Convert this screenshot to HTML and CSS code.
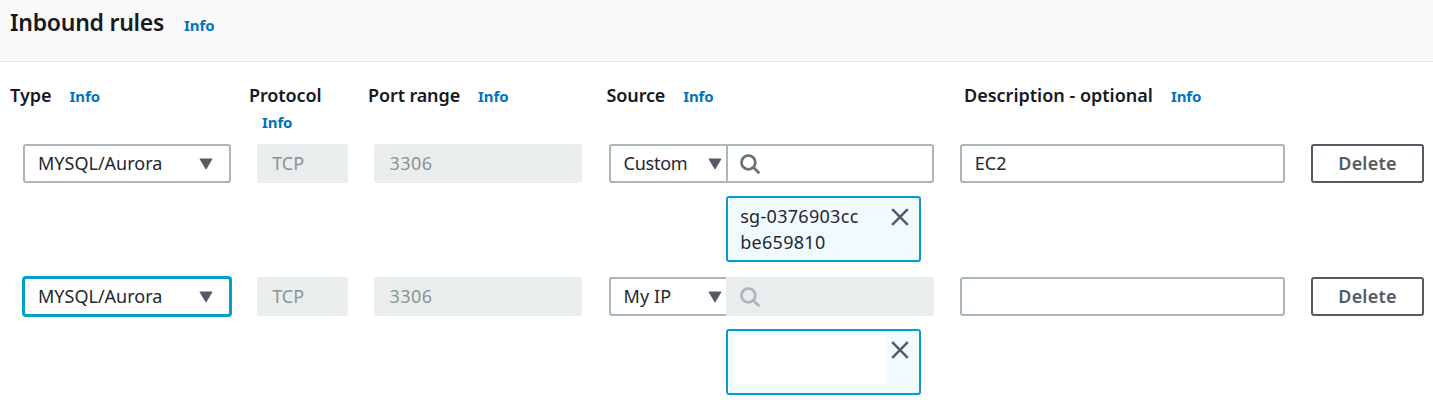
FILE: index.html
```html
<!DOCTYPE html>
<html lang="en">
<head>
<meta charset="utf-8">
<title>Inbound rules</title>
<link rel="stylesheet" href="styles.css">
</head>
<body>
<svg width="0" height="0" class="defs">
  <symbol id="caret" viewBox="0 0 14 12"><path d="M1.2 1h11.6L7 10.6z" fill="currentColor" stroke="currentColor" stroke-width="1.2" stroke-linejoin="round"/></symbol>
  <symbol id="search" viewBox="0 0 20 20"><g fill="none" stroke="currentColor" stroke-width="2.7"><circle cx="8.4" cy="8.4" r="6.9"/><path d="M13.2 13.2l6 6"/></g></symbol>
  <symbol id="close" viewBox="0 0 18 18"><path d="M1.2 1.2l15.6 15.6M16.8 1.2L1.2 16.8" fill="none" stroke="currentColor" stroke-width="2.5"/></symbol>
</svg>
<header class="panel-header"><h2 class="title">Inbound rules</h2><a class="info">Info</a></header>
<main>
  <div class="labels">
    <div class="label"><span>Type</span><a class="info">Info</a></div>
    <div class="label stacked"><span class="l-protocol">Protocol</span><a class="info">Info</a></div>
    <div class="label"><span class="l-port">Port range</span><a class="info">Info</a></div>
    <div class="label"><span class="l-source">Source</span><a class="info">Info</a></div>
    <div class="label"><span>Description - optional</span><a class="info">Info</a></div>
  </div>
  <div class="rule">
    <div class="field select"><span>MYSQL/Aurora</span><svg class="caret"><use href="#caret"/></svg></div>
    <div class="field disabled"><span class="t-tcp">TCP</span></div>
    <div class="field disabled"><span class="t-port">3306</span></div>
    <div class="source">
      <div class="field select mode"><span class="t-custom">Custom</span><svg class="caret"><use href="#caret"/></svg></div>
      <div class="field search"><svg class="glass"><use href="#search"/></svg></div>
      <div class="token"><span class="t-sg">sg-0376903cc<br>be659810</span><svg class="close"><use href="#close"/></svg></div>
    </div>
    <div class="field"><span>EC2</span></div>
    <button class="delete">Delete</button>
  </div>
  <div class="rule">
    <div class="field select focused"><span>MYSQL/Aurora</span><svg class="caret"><use href="#caret"/></svg></div>
    <div class="field disabled"><span class="t-tcp">TCP</span></div>
    <div class="field disabled"><span class="t-port">3306</span></div>
    <div class="source">
      <div class="field select mode"><span class="t-myip">My IP</span><svg class="caret"><use href="#caret"/></svg></div>
      <div class="field search disabled"><svg class="glass"><use href="#search"/></svg></div>
      <div class="token"><span class="blank"></span><svg class="close"><use href="#close"/></svg></div>
    </div>
    <div class="field"></div>
    <button class="delete">Delete</button>
  </div>
</main>
</body>
</html>
```
FILE: styles.css
```css
* { box-sizing: border-box; }
body { margin: 0; height: 402px; overflow: hidden; background: #fff; color: #16191f; font: 18px/26px "Noto Sans", sans-serif; }
.defs { display: block; }
.panel-header { display: flex; align-items: baseline; gap: 20px; height: 62px; padding: 6px 10px 0; background: #fafafa; border-bottom: 1px solid #e4e6e6; }
.title { margin: 0; font-size: 23px; line-height: 32px; font-weight: 600; letter-spacing: -0.26px; }
.info { color: #0073bb; font-size: 15px; line-height: 26px; font-weight: 700; letter-spacing: -0.1px; }
.labels { display: grid; grid-template-columns: 239px 119px 238.6px 357.4px 1fr; height: 82px; padding: 20px 0 0 10px; }
.label { display: flex; align-items: baseline; align-self: start; gap: 18px; font-weight: 600; white-space: nowrap; }
.l-port { letter-spacing: -0.12px; }
.l-source { letter-spacing: -0.15px; }
.l-protocol { letter-spacing: -0.1px; }
.stacked { flex-direction: column; align-items: flex-start; gap: 0; }
.stacked .info { margin: 1px 0 0 13px; }
.rule { display: grid; grid-template-columns: 208px 91px 208px 325px 325px 113px; column-gap: 26.2px; align-items: start; height: 133px; padding-left: 23px; }
.field { display: flex; align-items: center; height: 39px; padding: 0 13px; border: 2px solid #aab7b8; border-radius: 3px; background: #fff; color: #24272d; white-space: nowrap; }
.field > span { margin-top: -2px; }
.select { justify-content: space-between; padding-right: 16px; }
.disabled { background: #e9eded; border-color: #e9eded; color: #879596; }
.focused { border-color: #00a1c9; box-shadow: 0 0 0 1px #00a1c9; }
.caret { width: 14px; height: 12px; color: #545b64; }
.t-port { letter-spacing: 0.5px; }
.t-custom { letter-spacing: -0.25px; }
.t-myip { letter-spacing: 0.1px; }
.source { display: grid; grid-template-columns: 117.6px 207.4px; row-gap: 13px; }
.mode { padding-right: 4px; border-right: 0; border-radius: 3px 0 0 3px; }
.search { padding-left: 12px; border-radius: 0 3px 3px 0; }
.glass { width: 20px; height: 20px; color: #687078; }
.disabled .glass { color: #aab7b8; }
.token { grid-column: 2; display: flex; justify-content: space-between; width: 195px; height: 66px; padding: 5px 10px 0 12px; border: 2px solid #00a1c9; border-radius: 3px; background: #f1faff; color: #24272d; }
.t-sg { letter-spacing: 0.3px; }
.close { width: 18px; height: 18px; margin-top: 5px; color: #545b64; }
.blank { width: 151px; height: 48px; margin-left: -5px; background: #fff; }
.delete { height: 39px; padding: 0 0 2px; border: 2px solid #545b64; border-radius: 3px; background: #fff; color: #545b64; font: 600 18px/26px "Noto Sans", sans-serif; letter-spacing: 0.2px; }
```
